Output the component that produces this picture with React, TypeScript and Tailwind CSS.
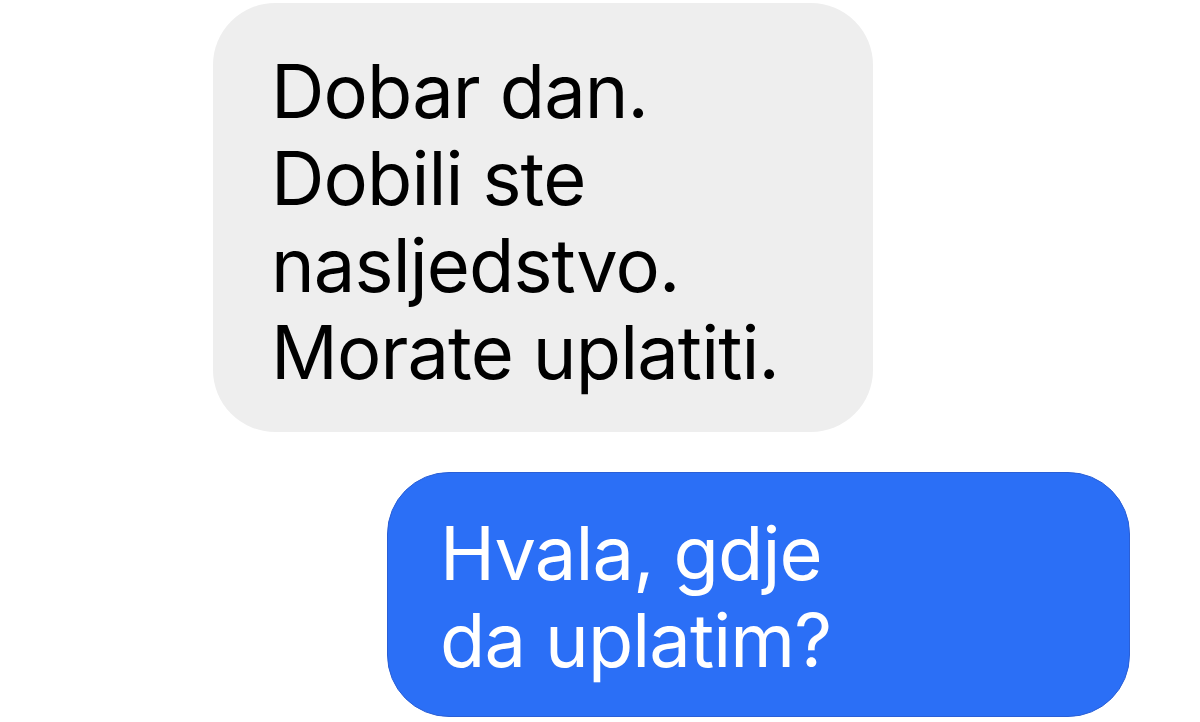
export default function App() {
    return (
        <div
            className="w-[1200px] h-[722px] bg-white overflow-hidden flex flex-col"
            style={{ fontFamily: 'Inter, "Noto Sans", sans-serif' }}
        >
            {/* incoming message */}
            <div className="ml-[213px] mt-[3px] w-[660px] h-[429px] rounded-[62px] bg-[#eeeeee] pl-[58px] pt-[45px] text-black text-[74px] leading-[87px] tracking-[-0.012em]">
                <p>Dobar dan.</p>
                <p>Dobili ste</p>
                <p>nasljedstvo.</p>
                <p>Morate uplatiti.</p>
            </div>

            {/* outgoing message */}
            <div className="ml-[387px] mt-[40px] w-[743px] h-[245px] rounded-[62px] bg-[#2b6ff6] border border-[#2a5fd6] pl-[52px] pt-[37px] text-white text-[74px] leading-[87px] tracking-[-0.012em]">
                <p>Hvala, gdje</p>
                <p>da uplatim?</p>
            </div>
        </div>
    );
}
